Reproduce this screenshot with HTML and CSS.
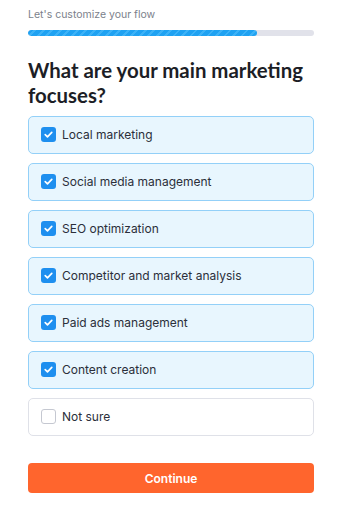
FILE: index.html
```html
<!DOCTYPE html>
<html lang="en">
<head>
    <meta charset="UTF-8">
    <meta name="viewport" content="width=device-width, initial-scale=1.0">
    <title>Customize your flow</title>
    <link rel="stylesheet" href="styles.css">
</head>
<body>
    <div class="wrap">
        <p class="step">Let's customize your flow</p>
        <div class="progress"><div class="progress-fill" style="width: 80%"></div></div>

        <h1>What are your main marketing focuses?</h1>

        <div class="options">
            <label class="option checked"><span class="box"><svg viewBox="0 0 16 16"><path d="M4.5 8.2l2.4 2.3 4.6-4.8"/></svg></span>Local marketing</label>
            <label class="option checked"><span class="box"><svg viewBox="0 0 16 16"><path d="M4.5 8.2l2.4 2.3 4.6-4.8"/></svg></span>Social media management</label>
            <label class="option checked"><span class="box"><svg viewBox="0 0 16 16"><path d="M4.5 8.2l2.4 2.3 4.6-4.8"/></svg></span>SEO optimization</label>
            <label class="option checked"><span class="box"><svg viewBox="0 0 16 16"><path d="M4.5 8.2l2.4 2.3 4.6-4.8"/></svg></span>Competitor and market analysis</label>
            <label class="option checked"><span class="box"><svg viewBox="0 0 16 16"><path d="M4.5 8.2l2.4 2.3 4.6-4.8"/></svg></span>Paid ads management</label>
            <label class="option checked"><span class="box"><svg viewBox="0 0 16 16"><path d="M4.5 8.2l2.4 2.3 4.6-4.8"/></svg></span>Content creation</label>
            <label class="option"><span class="box"></span>Not sure</label>
        </div>

        <button class="continue">Continue</button>
    </div>
</body>
</html>
```

FILE: styles.css
```css
body {
    margin: 0;
    background: #ffffff;
    font-family: Inter, "Noto Sans", sans-serif;
    color: #2b2f3a;
}
.wrap {
    padding: 8px 35px 0 28px;
}
.step {
    margin: 0;
    font-size: 10.5px;
    line-height: 14px;
    color: #7b7f8b;
}
.progress {
    margin-top: 8px;
    height: 6px;
    border-radius: 3px;
    background: #e1e2ea;
    overflow: hidden;
}
.progress-fill {
    height: 100%;
    border-radius: 3px;
    background: repeating-linear-gradient(-45deg, #1fa2f2 0, #1fa2f2 4px, #3cb2f7 4px, #3cb2f7 6px);
}
h1 {
    margin: 22px 0 8px;
    font-family: Lato, sans-serif;
    font-size: 20.4px;
    line-height: 25px;
    font-weight: 700;
    color: #1c1e26;
}
.options {
    display: flex;
    flex-direction: column;
    gap: 9px;
}
.option {
    display: flex;
    align-items: center;
    gap: 6px;
    height: 38px;
    box-sizing: border-box;
    padding: 0 12px 1px;
    border: 1px solid #dfe1e8;
    border-radius: 5px;
    font-size: 12px;
    background: #fff;
}
.option.checked {
    background: #e8f6fe;
    border-color: #93d0f8;
}
.box {
    width: 15px;
    height: 15px;
    box-sizing: border-box;
    border: 1px solid #c5c8d1;
    border-radius: 3px;
    background: #fff;
    display: flex;
}
.checked .box {
    border: none;
    background: #1e8fef;
}
.box svg {
    width: 15px;
    height: 15px;
    fill: none;
    stroke: #fff;
    stroke-width: 1.8;
    stroke-linecap: round;
    stroke-linejoin: round;
}
.continue {
    display: block;
    width: 100%;
    height: 30px;
    margin-top: 27px;
    border: none;
    border-radius: 4px;
    background: #ff652d;
    color: #fff;
    font-family: Inter, sans-serif;
    font-size: 12px;
    font-weight: 600;
    cursor: pointer;
}
```
